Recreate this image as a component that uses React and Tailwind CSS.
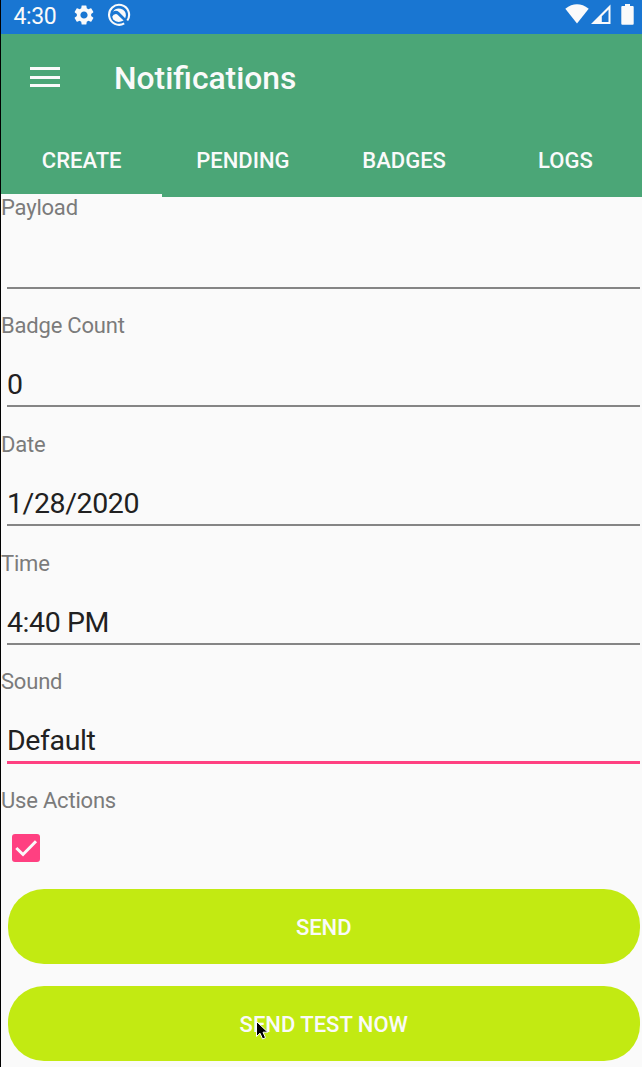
import { MdSettings } from "react-icons/md";

function StatusBar() {
  return (
    <div className="flex h-[33.5px] shrink-0 items-start bg-[#1976d2] pl-[12.5px] pr-[8px] text-[#fafafa]">
      <span className="w-[58.5px] text-[23px] leading-[33px] tracking-[-0.4px]">4:30</span>
      <MdSettings className="mt-[3px] h-[24px] w-[24px]" />
      <svg className="ml-[11px] mt-[3px] h-6 w-6" viewBox="0 0 24 24" fill="none" stroke="currentColor">
        <path d="M20.3 17.500A10 10 0 1 0 17.200 20.400" strokeWidth="2.100" />
        <path d="M6 8.700A7 7 0 0 1 18.900 12.500L18.200 15.200L12.200 9.200Q9.200 6.800 6 8.700Z" fill="currentColor" stroke="none" />
        <path d="M5.200 13.800Q6.500 10.500 10 11.200L16.600 17.600Q10.500 21 6.200 16.600Z" fill="currentColor" stroke="none" />
      </svg>
      <svg className="ml-auto mt-1 h-5 w-6" viewBox="0 0 24 20" fill="currentColor">
        <path d="M0.3 4.7Q12 -4.1 23.7 4.7L12 19.6Z" />
      </svg>
      <svg className="ml-[2px] mt-1 h-5 w-5" viewBox="0 0 20 20" fill="currentColor">
        <path fillRule="evenodd" d="M19.5 0.5V20H0ZM17.5 5.5L10.8 12.2V18H17.5Z" />
      </svg>
      <svg className="ml-[10px] mt-1 h-[21px] w-[13px]" viewBox="0 0 13 21" fill="currentColor">
        <path d="M4 0h5v2h2.700q1 0 1 1v16.700q0 1-1 1H1.300q-1 0-1-1V3q0-1 1-1H4z" />
      </svg>
    </div>
  );
}

const tabs = ["CREATE", "PENDING", "BADGES", "LOGS"];

const fields = [
  { label: "Payload", value: "" },
  { label: "Badge Count", value: "0" },
  { label: "Date", value: "1/28/2020" },
  { label: "Time", value: "4:40 PM" },
  { label: "Sound", value: "Default", active: true },
];

function Label({ children }) {
  return <div className="h-[26px] text-[22px] leading-[26px] tracking-[-0.2px] text-[#7b7b7b]">{children}</div>;
}

function Field({ label, value, active }) {
  return (
    <div className="flex h-[118.7px] flex-col">
      <Label>{label}</Label>
      <div className="ml-[6px] mr-[2px] mt-[28px] h-[38px] text-[28.5px] leading-[36px] tracking-[-0.4px] text-[#212121]">{value}</div>
      <div className={active ? "ml-[6px] mr-[2px] h-[3px] bg-[#ff4081]" : "ml-[6px] mr-[2px] h-[2px] bg-[#858585]"} />
    </div>
  );
}

function Button({ children }) {
  return (
    <button className="relative ml-[6.5px] mr-[2px] flex h-[75px] shrink-0 items-center justify-center rounded-[36px] bg-[#c2ea12] pt-[2px] text-[22px] font-medium text-[#fafafa]">
      {children}
    </button>
  );
}

export default function App() {
  return (
    <div className="flex h-[1067px] w-[642px] flex-col overflow-hidden border-l border-black bg-[#fafafa] font-[Roboto,sans-serif]">
      <StatusBar />
      <header className="flex h-[163px] shrink-0 flex-col bg-[#4ba677] text-[#fafafa]">
        <div className="flex h-[87px] items-center pl-[29px]">
          <div className="flex w-[30px] flex-col gap-[5.5px]">
            <div className="h-[3px] bg-[#fafafa]" />
            <div className="h-[3px] bg-[#fafafa]" />
            <div className="h-[3px] bg-[#fafafa]" />
          </div>
          <h1 className="ml-[54px] pt-[4px] text-[31.8px] font-medium">Notifications</h1>
        </div>
        <nav className="grid h-[76px] w-[645px] grid-cols-4">
          {tabs.map((tab, i) => (
            <div
              key={tab}
              className={
                i === 0
                  ? "border-b-3 border-[#fafafa] pt-[23px] text-center text-[22px] leading-[33px] font-medium"
                  : "pt-[23px] text-center text-[22px] leading-[33px] font-medium"
              }
            >
              {tab}
            </div>
          ))}
        </nav>
      </header>
      <main className="-mt-[2px] flex grow flex-col">
        {fields.map((field) => (
          <Field key={field.label} {...field} />
        ))}
        <Label>Use Actions</Label>
        <svg className="ml-[11px] mt-[20px] h-[28px] w-[28px] shrink-0" viewBox="0 0 28 28">
          <rect width="28" height="28" rx="3" fill="#ff4081" />
          <path d="M4.300 14L11 20.500L24 7.300" fill="none" stroke="#fafafa" strokeWidth="3" />
        </svg>
        <div className="mt-[27px] flex flex-col gap-[22px]">
          <Button>SEND</Button>
          <Button>
            SEND TEST NOW
            <svg className="absolute left-[247px] top-[34px] h-[22px] w-[16px]" viewBox="0 0 16 22">
              <path
                d="M1.500 1.500V16.500L5 13.200L7.600 19L10.500 17.700L8 12.200H12.800Z"
                fill="#000"
                stroke="#fff"
                strokeWidth="1"
              />
            </svg>
          </Button>
        </div>
      </main>
    </div>
  );
}
